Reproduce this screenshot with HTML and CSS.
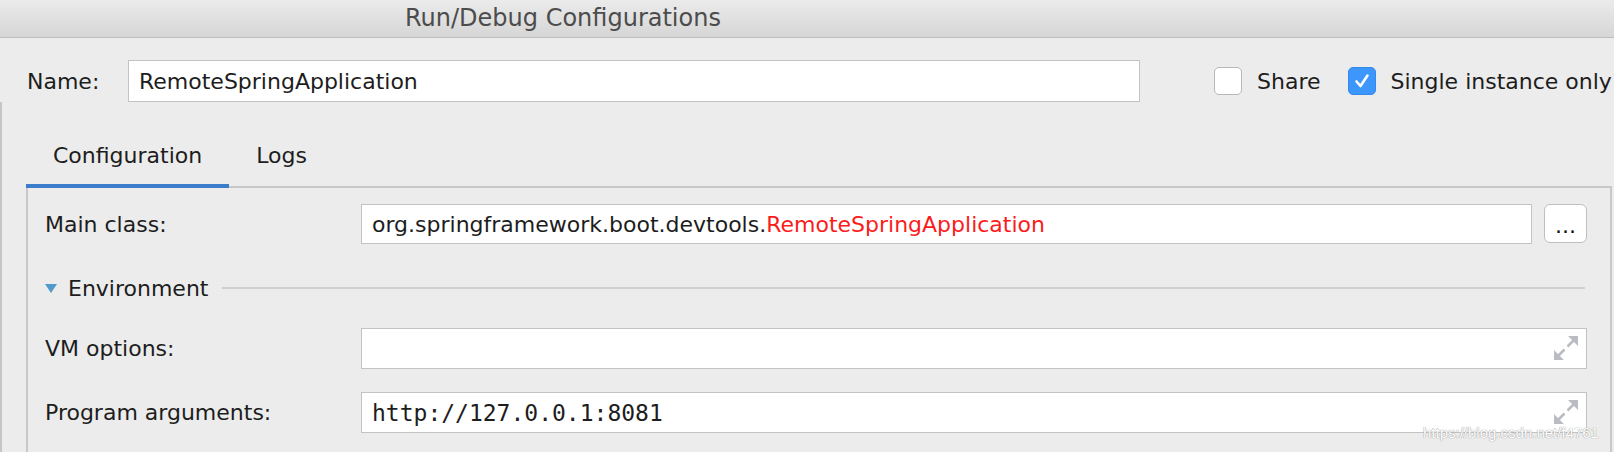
FILE: index.html
```html
<!DOCTYPE html>
<html>
<head>
<meta charset="utf-8">
<title>Run/Debug Configurations</title>
<link rel="stylesheet" href="styles.css">
</head>
<body>
<div class="window">
  <div class="titlebar">Run/Debug Configurations</div>
  <div class="name-row">
    <label class="name-label">Name:</label>
    <div class="field name-field">RemoteSpringApplication</div>
    <div class="opts">
      <div class="opt">
        <span class="checkbox"></span>
        <span>Share</span>
      </div>
      <div class="opt">
        <span class="checkbox checked">
          <svg width="28" height="28" viewBox="0 0 28 28"><path d="M8.5 14.5 L12.5 19 L19.5 8.5" fill="none" stroke="#fff" stroke-width="2.6" stroke-linecap="round" stroke-linejoin="round"/></svg>
        </span>
        <span>Single instance only</span>
      </div>
    </div>
  </div>
  <div class="content">
    <div class="tabs">
      <div class="tab active">Configuration</div>
      <div class="tab">Logs</div>
    </div>
    <div class="panel">
      <div class="row row-main">
        <div class="label">Main class:</div>
        <div class="main-ctrl">
          <div class="field main-field">org.springframework.boot.devtools.<span class="hl">RemoteSpringApplication</span></div>
          <div class="browse">...</div>
        </div>
      </div>
      <div class="env-row">
        <span class="tri"></span>
        <span class="env-text">Environment</span>
        <span class="env-line"></span>
      </div>
      <div class="row row-vm">
        <div class="label">VM options:</div>
        <div class="field expand-field">
          <span class="mono"></span>
          <svg class="expand" width="24" height="24" viewBox="0 0 24 24"><path d="M24 0 L24 10 L14 0 Z M0 24 L10 24 L0 14 Z" fill="#b9bdc1"/><path d="M20 4 L13.5 10.5 M4 20 L10.5 13.5" stroke="#b9bdc1" stroke-width="2.6"/></svg>
        </div>
      </div>
      <div class="row row-prog">
        <div class="label">Program arguments:</div>
        <div class="field expand-field">
          <span class="mono">http://127.0.0.1:8081</span>
          <svg class="expand" width="24" height="24" viewBox="0 0 24 24"><path d="M24 0 L24 10 L14 0 Z M0 24 L10 24 L0 14 Z" fill="#b9bdc1"/><path d="M20 4 L13.5 10.5 M4 20 L10.5 13.5" stroke="#b9bdc1" stroke-width="2.6"/></svg>
        </div>
      </div>
    </div>
  </div>
  <div class="watermark">https://blog.csdn.net/f4761</div>
</div>
</body>
</html>
```
FILE: styles.css
```css
* { box-sizing: border-box; }
html, body { margin: 0; padding: 0; }
body {
  background: #ececec;
  font-family: "DejaVu Sans", "Liberation Sans", sans-serif;
  font-size: 22px;
  color: #1d1d1d;
}
.window {
  position: relative;
  width: 1614px;
  height: 452px;
  overflow: hidden;
  background: #ececec;
}
.titlebar {
  height: 38px;
  line-height: 37px;
  padding-left: 405px;
  font-size: 24px;
  color: #4c4c4c;
  background: linear-gradient(#ebebeb, #d6d6d6);
  border-bottom: 1px solid #bdbdbd;
  white-space: nowrap;
}
.name-row {
  display: flex;
  align-items: center;
  height: 64px;
  padding-top: 22px;
  padding-left: 27px;
  white-space: nowrap;
}
.name-label { width: 101px; }
.field {
  background: #fff;
  border: 1px solid #c3c3c3;
  display: flex;
  align-items: center;
  padding-left: 10px;
  white-space: nowrap;
}
.name-field { width: 1012px; height: 42px; }
.opts {
  display: flex;
  align-items: center;
  gap: 27px;
  margin-left: 74px;
}
.opt { display: flex; align-items: center; gap: 15px; }
.checkbox {
  width: 28px;
  height: 28px;
  border: 1px solid #b8b8b8;
  border-radius: 5px;
  background: #fff;
  display: block;
}
.checkbox.checked {
  background: #3d96fb;
  border-color: #3489ee;
}
.checkbox svg { display: block; margin: -1px; }
.content {
  height: 350px;
  border-left: 2px solid #c6c6c6;
  padding-left: 24px;
  padding-right: 2px;
}
.tabs {
  display: flex;
  align-items: flex-end;
  height: 86px;
  margin-bottom: -2px;
  position: relative;
  z-index: 1;
}
.tab {
  line-height: 40px;
  padding: 0 27px 8px;
  border-bottom: 4px solid transparent;
}
.tab.active { border-bottom-color: #3b7ccb; }
.panel {
  height: 266px;
  border: 2px solid #c8c8c8;
  border-bottom: none;
  padding: 16px 23px 0 17px;
}
.row {
  display: grid;
  grid-template-columns: 316px 1fr;
  align-items: center;
}
.main-ctrl { display: flex; gap: 12px; }
.main-field { flex: 1; height: 40px; }
.hl { color: #fb1b1b; }
.browse {
  width: 43px;
  height: 39px;
  border: 1px solid #bfbfbf;
  border-radius: 6px;
  background: #fff;
  text-align: center;
  line-height: 42px;
  font-size: 22px;
  color: #111;
  overflow: hidden;
}
.env-row {
  display: flex;
  align-items: center;
  height: 40px;
  margin-top: 24px;
}
.tri {
  width: 0;
  height: 0;
  border-left: 6.5px solid transparent;
  border-right: 6.5px solid transparent;
  border-top: 9px solid #4f9acb;
  margin-right: 11px;
}
.env-line {
  flex: 1;
  height: 2px;
  background: #d0d0d0;
  margin-left: 14px;
  margin-right: 2px;
}
.row-vm { margin-top: 20px; }
.row-prog { margin-top: 23px; }
.expand-field {
  height: 41px;
  justify-content: space-between;
  padding-right: 8px;
}
.mono {
  font-family: "DejaVu Sans Mono", "Liberation Mono", monospace;
  font-size: 23px;
}
.expand { align-self: flex-start; margin-top: 7px; }
.watermark {
  position: absolute;
  left: 1423px;
  top: 425px;
  font-family: "Liberation Sans", sans-serif;
  font-size: 15px;
  line-height: 15px;
  color: #fff;
  text-shadow: 0 0 1px #9a9a9a, 0 0 1px #9a9a9a;
  white-space: nowrap;
}
```
